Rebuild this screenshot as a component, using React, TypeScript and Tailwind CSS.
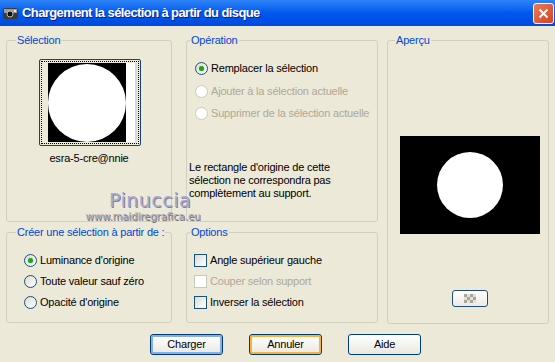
import React from "react";

const font = { fontFamily: '"Liberation Sans", Arial, sans-serif' };

function Radio({ checked, disabled, label }: { checked?: boolean; disabled?: boolean; label: string }) {
  return (
    <div className="flex h-[21px] items-center gap-[3px] whitespace-nowrap">
      <span
        className={
          "flex h-[13px] w-[13px] shrink-0 items-center justify-center rounded-full border " +
          (disabled
            ? "border-[#CAC8BB] bg-white"
            : "border-[#1C5180] bg-gradient-to-br from-[#DCDCD4] to-white")
        }
      >
        {checked && <span className="h-[5px] w-[5px] rounded-full bg-[#21A121] shadow-[0_0_1px_#5CD35C]" />}
      </span>
      <span className={disabled ? "text-[#ACA899]" : "text-black"}>{label}</span>
    </div>
  );
}

function Check({ disabled, label }: { disabled?: boolean; label: string }) {
  return (
    <div className="flex h-[21px] items-center gap-[3px] whitespace-nowrap">
      <span
        className={
          "h-[13px] w-[13px] shrink-0 border " +
          (disabled
            ? "border-[#CAC8BB] bg-white"
            : "border-[#1C5180] bg-gradient-to-br from-[#DCDCD4] to-white")
        }
      />
      <span className={disabled ? "text-[#ACA899]" : "text-black"}>{label}</span>
    </div>
  );
}

function Group({
  title,
  offset,
  className,
  children,
}: {
  title: string;
  offset: string;
  className?: string;
  children?: React.ReactNode;
}) {
  return (
    <fieldset className={"min-w-0 rounded-[3px] border border-[#D0D0BF] " + (className ?? "")}>
      <legend className={"whitespace-nowrap px-[1px] leading-[13px] text-[#0046D5] " + offset}>{title}</legend>
      {children}
    </fieldset>
  );
}

function XpButton({ label, glow }: { label: string; glow?: "blue" | "orange" }) {
  const ring =
    glow === "blue"
      ? "shadow-[inset_0_0_0_2px_#89ADE4]"
      : glow === "orange"
      ? "shadow-[inset_0_0_0_2px_#F8B33E]"
      : "";
  return (
    <div
      className={
        "flex h-[21px] w-[73px] items-center justify-center rounded-[3px] border border-[#003C74] bg-gradient-to-b from-white to-[#E9E8E1] text-black " +
        ring
      }
    >
      {label}
    </div>
  );
}

export default function App() {
  return (
    <div
      className="relative h-[362px] w-[555px] overflow-hidden bg-[#ECE9D8] text-[11px] tracking-[-0.2px]"
      style={font}
    >
      {/* title bar */}
      <div className="flex h-[26px] items-center bg-gradient-to-b from-[#2E83F8] via-[#0058EE] to-[#0049DE] pl-[2px] pr-[1px]">
        <svg width="17" height="15" viewBox="0 0 17 15" className="mr-[3px]">
          <rect x="1" y="2" width="15" height="11" rx="2" fill="#3b3b3b" />
          <rect x="2" y="3" width="13" height="4" fill="#9c9c9c" />
          <circle cx="8" cy="8" r="3" fill="#111" stroke="#bbb" strokeWidth="1" />
          <rect x="12" y="4" width="2" height="2" fill="#e8e8e8" />
        </svg>
        <span className="text-[13px] font-bold tracking-[-0.6px] text-white [text-shadow:1px_1px_0_#0A1E8C]">
          Chargement la sélection à partir du disque
        </span>
        <div className="ml-auto flex h-[21px] w-[21px] items-center justify-center rounded-[3px] border border-white bg-gradient-to-br from-[#E97A5B] to-[#D2421C]">
          <svg width="11" height="11" viewBox="0 0 11 11">
            <path d="M1.5 1.5 L9.5 9.5 M9.5 1.5 L1.5 9.5" stroke="white" strokeWidth="2" />
          </svg>
        </div>
      </div>

      {/* body */}
      <div className="flex px-[6px] pt-[8px]">
        <div className="grid w-[372px] grid-cols-[166px_192px] grid-rows-[188px_97px] gap-x-[14px] gap-y-[4px]">
          <Group title="Sélection" offset="ml-[9px]">
            <div className="mt-[12px] flex flex-col items-center">
              <div className="ml-[2px] flex h-[87px] w-[102px] items-center justify-center rounded-[2px] border border-[#1F3F73]">
                <div className="flex h-[83px] w-[98px] items-center border border-dotted border-black p-[1px]">
                  <div className="ml-[5px] flex h-[79px] w-[79px] items-center justify-center bg-black">
                    <div className="h-[78px] w-[78px] rounded-full bg-white" />
                  </div>
                  <div className="h-[79px] w-[9px] bg-white" />
                  <div className="h-[79px] w-[2px] bg-[#D8D8D8]" />
                </div>
              </div>
              <div className="mt-[6px] leading-[13px] text-black">esra-5-cre@nnie</div>
            </div>
          </Group>

          <Group title="Opération" offset="ml-[3px]">
            <div className="mt-[11px] flex flex-col gap-[1.5px] pl-[8px]">
              <Radio checked label="Remplacer la sélection" />
              <Radio disabled label="Ajouter à la sélection actuelle" />
              <Radio disabled label="Supprimer de la sélection actuelle" />
            </div>
            <p className="mt-[37px] pl-[2px] leading-[13px] text-black">
              Le rectangle d'origine de cette
              <br />
              sélection ne correspondra pas
              <br />
              complètement au support.
            </p>
          </Group>

          <Group title="Créer une sélection à partir de :" offset="ml-[9px]">
            <div className="mt-[11px] flex flex-col pl-[17px]">
              <Radio checked label="Luminance d'origine" />
              <Radio label="Toute valeur sauf zéro" />
              <Radio label="Opacité d'origine" />
            </div>
          </Group>

          <Group title="Options" offset="ml-[3px]">
            <div className="mt-[11px] flex flex-col pl-[7px]">
              <Check label="Angle supérieur gauche" />
              <Check disabled label="Couper selon support" />
              <Check label="Inverser la sélection" />
            </div>
          </Group>
        </div>

        <Group title="Aperçu" offset="ml-[7px]" className="ml-[9px] h-[290px] w-[165px]">
          <div className="flex flex-col items-center pl-[3px]">
            <div className="mt-[89px] flex h-[98px] w-[140px] items-center justify-center bg-black">
              <div className="h-[66px] w-[66px] rounded-full bg-white" />
            </div>
            <div className="mt-[56px] flex h-[17px] w-[36px] items-center justify-center rounded-[3px] border border-[#1F4E7E] bg-gradient-to-b from-white to-[#ECEBE4]">
              <div className="grid grid-cols-4">
                {Array.from({ length: 12 }).map((_, i) => (
                  <span
                    key={i}
                    className={
                      "h-[3px] w-[3px] " + ((Math.floor(i / 4) + (i % 4)) % 2 === 0 ? "bg-[#A8A69A]" : "bg-[#E4E2D8]")
                    }
                  />
                ))}
              </div>
            </div>
          </div>
        </Group>
      </div>

      {/* buttons */}
      <div className="ml-[150px] mt-[10px] flex gap-[26px]">
        <XpButton label="Charger" glow="blue" />
        <XpButton label="Annuler" glow="orange" />
        <XpButton label="Aide" />
      </div>

      {/* watermark */}
      <div className="pointer-events-none absolute left-[83px] top-[189px] flex w-[120px] flex-col items-center">
        <span
          className="ml-[14px] text-[19px] leading-[22px] tracking-[0.5px] text-[#A8ABCB] [text-shadow:1px_1px_0_#7E80A0]"
          style={{ fontFamily: '"DejaVu Sans", sans-serif' }}
        >
          Pinuccia
        </span>
        <span
          className="text-[10px] leading-[12px] tracking-[0px] text-[#A9A9B4] [text-shadow:1px_1px_0_#6E6E7A]"
          style={{ fontFamily: '"DejaVu Sans", sans-serif' }}
        >
          www.maidiregrafica.eu
        </span>
      </div>
    </div>
  );
}
